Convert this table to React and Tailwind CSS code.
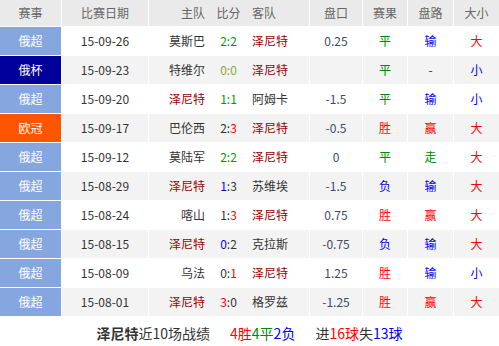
import React from "react";

const ZENIT = "泽尼特";

// match rows: league, date, home, score parts, away, handicap, result, pan, size
const rows = [
  { lg: "俄超", date: "15-09-26", home: "莫斯巴", score: [["2:2", "text-[#009900]"]], away: ZENIT, hc: "0.25", res: "平", pan: "输", ou: "大" },
  { lg: "俄杯", date: "15-09-23", home: "特维尔", score: [["0:0", "text-[#8fa33a]"]], away: ZENIT, hc: "", res: "平", pan: "-", ou: "小" },
  { lg: "俄超", date: "15-09-20", home: ZENIT, score: [["1:1", "text-[#009900]"]], away: "阿姆卡", hc: "-1.5", res: "平", pan: "输", ou: "小" },
  { lg: "欧冠", date: "15-09-17", home: "巴伦西", score: [["2:", "text-[#333]"], ["3", "text-[#ff0000]"]], away: ZENIT, hc: "-0.5", res: "胜", pan: "赢", ou: "大" },
  { lg: "俄超", date: "15-09-12", home: "莫陆军", score: [["2:2", "text-[#009900]"]], away: ZENIT, hc: "0", res: "平", pan: "走", ou: "大" },
  { lg: "俄超", date: "15-08-29", home: ZENIT, score: [["1", "text-[#0000ff]"], [":3", "text-[#333]"]], away: "苏维埃", hc: "-1.5", res: "负", pan: "输", ou: "大" },
  { lg: "俄超", date: "15-08-24", home: "喀山", score: [["1:", "text-[#333]"], ["3", "text-[#ff0000]"]], away: ZENIT, hc: "0.75", res: "胜", pan: "赢", ou: "大" },
  { lg: "俄超", date: "15-08-15", home: ZENIT, score: [["0", "text-[#0000ff]"], [":2", "text-[#333]"]], away: "克拉斯", hc: "-0.75", res: "负", pan: "输", ou: "大" },
  { lg: "俄超", date: "15-08-09", home: "乌法", score: [["0:", "text-[#333]"], ["1", "text-[#ff0000]"]], away: ZENIT, hc: "1.25", res: "胜", pan: "输", ou: "小" },
  { lg: "俄超", date: "15-08-01", home: ZENIT, score: [["3", "text-[#ff0000]"], [":0", "text-[#333]"]], away: "格罗兹", hc: "-1.25", res: "胜", pan: "赢", ou: "大" },
];

const lgColor = {
  俄超: "bg-[#86a6df]",
  俄杯: "bg-[#00009c]",
  欧冠: "bg-[#ff5500]",
};

const wordColor = {
  胜: "text-[#ff0000]",
  赢: "text-[#ff0000]",
  大: "text-[#ff0000]",
  平: "text-[#008800]",
  走: "text-[#008800]",
  负: "text-[#0000ff]",
  输: "text-[#0000ff]",
  小: "text-[#0000ff]",
  "-": "text-[#333]",
};

const teamColor = (name) => (name === ZENIT ? "text-[#990000]" : "text-[#333]");

const App = () => {
  return (
    <div
      className="w-[499px] h-[346px] bg-white text-[12px] text-[#333] overflow-hidden"
      style={{ fontFamily: '"Noto Sans CJK SC", "Noto Sans", sans-serif' }}
    >
      <div className="flex flex-col gap-px bg-white">
        {/* header */}
        <div className="flex gap-px h-[26px] text-[#666]">
          <div className="w-[61px] bg-[#eaeaea] flex items-center justify-center">赛事</div>
          <div className="w-[86px] bg-[#eaeaea] flex items-center justify-center">比赛日期</div>
          <div className="w-[160px] bg-[#eaeaea] flex items-center">
            <span className="w-[56px] text-right">主队</span>
            <span className="w-[47px] text-center">比分</span>
            <span className="flex-1 text-left">客队</span>
          </div>
          <div className="w-[52px] bg-[#eaeaea] flex items-center justify-center">盘口</div>
          <div className="w-[44px] bg-[#eaeaea] flex items-center justify-center">赛果</div>
          <div className="w-[45px] bg-[#eaeaea] flex items-center justify-center">盘路</div>
          <div className="w-[45px] bg-[#eaeaea] flex items-center justify-center">大小</div>
        </div>

        {rows.map((r, i) => {
          const bg = i % 2 === 0 ? "bg-white" : "bg-[#f3f3f3]";
          return (
            <div key={r.date} className="flex gap-px h-[28px]">
              <div className={`w-[61px] ${lgColor[r.lg]} text-white flex items-center justify-center`}>
                {r.lg}
              </div>
              <div className={`w-[86px] ${bg} flex items-center justify-center`}>{r.date}</div>
              <div className={`w-[160px] ${bg} flex items-center`}>
                <span className={`w-[56px] text-right ${teamColor(r.home)}`}>{r.home}</span>
                <span className="w-[47px] text-center">
                  {r.score.map(([t, c], j) => (
                    <span key={j} className={c}>
                      {t}
                    </span>
                  ))}
                </span>
                <span className={`flex-1 text-left ${teamColor(r.away)}`}>{r.away}</span>
              </div>
              <div className={`w-[52px] ${bg} flex items-center justify-center text-[#3d4b66]`}>{r.hc}</div>
              <div className={`w-[44px] ${bg} flex items-center justify-center ${wordColor[r.res]}`}>{r.res}</div>
              <div className={`w-[45px] ${bg} flex items-center justify-center ${wordColor[r.pan]}`}>{r.pan}</div>
              <div className={`w-[45px] ${bg} flex items-center justify-center ${wordColor[r.ou]}`}>{r.ou}</div>
            </div>
          );
        })}
      </div>

      {/* summary */}
      <div className="h-[34px] flex items-center justify-center gap-5 text-[14px] text-[#333]">
        <span>
          <b className="font-bold">{ZENIT}</b>近10场战绩
        </span>
        <span>
          <span className="text-[#ff0000]">4胜</span>
          <span className="text-[#008800]">4平</span>
          <span className="text-[#0000ff]">2负</span>
        </span>
        <span>
          进<span className="text-[#ff0000]">16球</span>失<span className="text-[#0000ff]">13球</span>
        </span>
      </div>
    </div>
  );
};

export default App;
